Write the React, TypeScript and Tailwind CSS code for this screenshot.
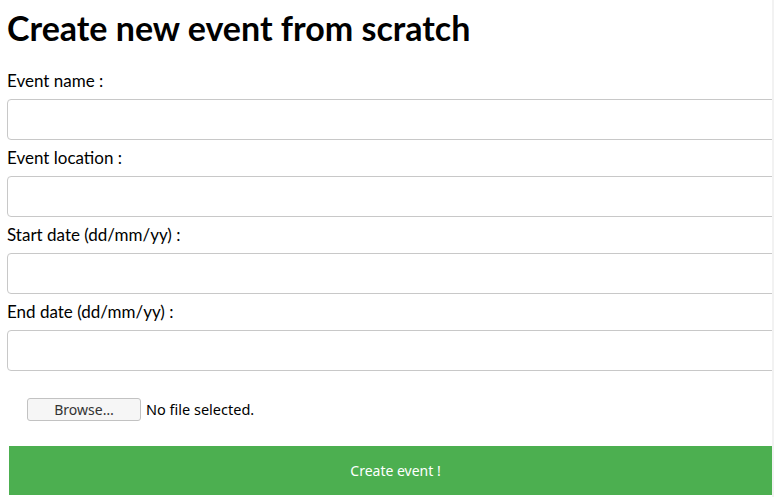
const fields = [
  "Event name :",
  "Event location :",
  "Start date (dd/mm/yy) :",
  "End date (dd/mm/yy) :",
];

const App = () => {
  return (
    <div className="flex w-[774px] h-[497px] bg-white overflow-hidden">
      <div className="flex-1 overflow-hidden pl-[7px]" style={{ fontFamily: "Lato, sans-serif" }}>
        <h1 className="mt-[8px] text-[34px] leading-[40px] font-bold text-black whitespace-nowrap">
          Create new event from scratch
        </h1>
        <form className="mt-[20px]">
          {fields.map((label) => (
            <div key={label} className="mb-[5px]">
              <label className="block pt-[1px] text-[17px] leading-[24px] text-black whitespace-nowrap">
                {label}
              </label>
              <input
                type="text"
                className="mt-[6px] block w-[800px] h-[41px] border border-[#c8c8c8] rounded-[4px] bg-white"
              />
            </div>
          ))}
          <div
            className="mt-[27px] ml-[20px] flex items-center gap-[5px]"
            style={{ fontFamily: "'Noto Sans', sans-serif" }}
          >
            <button
              type="button"
              className="w-[114px] h-[23px] border border-[#c2c2c2] rounded-[3px] bg-[#f6f6f6] text-[14px] text-[#333]"
            >
              Browse…
            </button>
            <span className="text-[14.5px] text-black">No file selected.</span>
          </div>
          <button
            type="button"
            className="mt-[25px] ml-[2px] block w-[773px] h-[49px] bg-[#4caf50] text-white text-[14px]"
            style={{ fontFamily: "'Noto Sans', sans-serif" }}
          >
            Create event !
          </button>
        </form>
      </div>
      <div className="w-[2px] bg-[#f2f2f2]" />
    </div>
  );
};

export default App;
